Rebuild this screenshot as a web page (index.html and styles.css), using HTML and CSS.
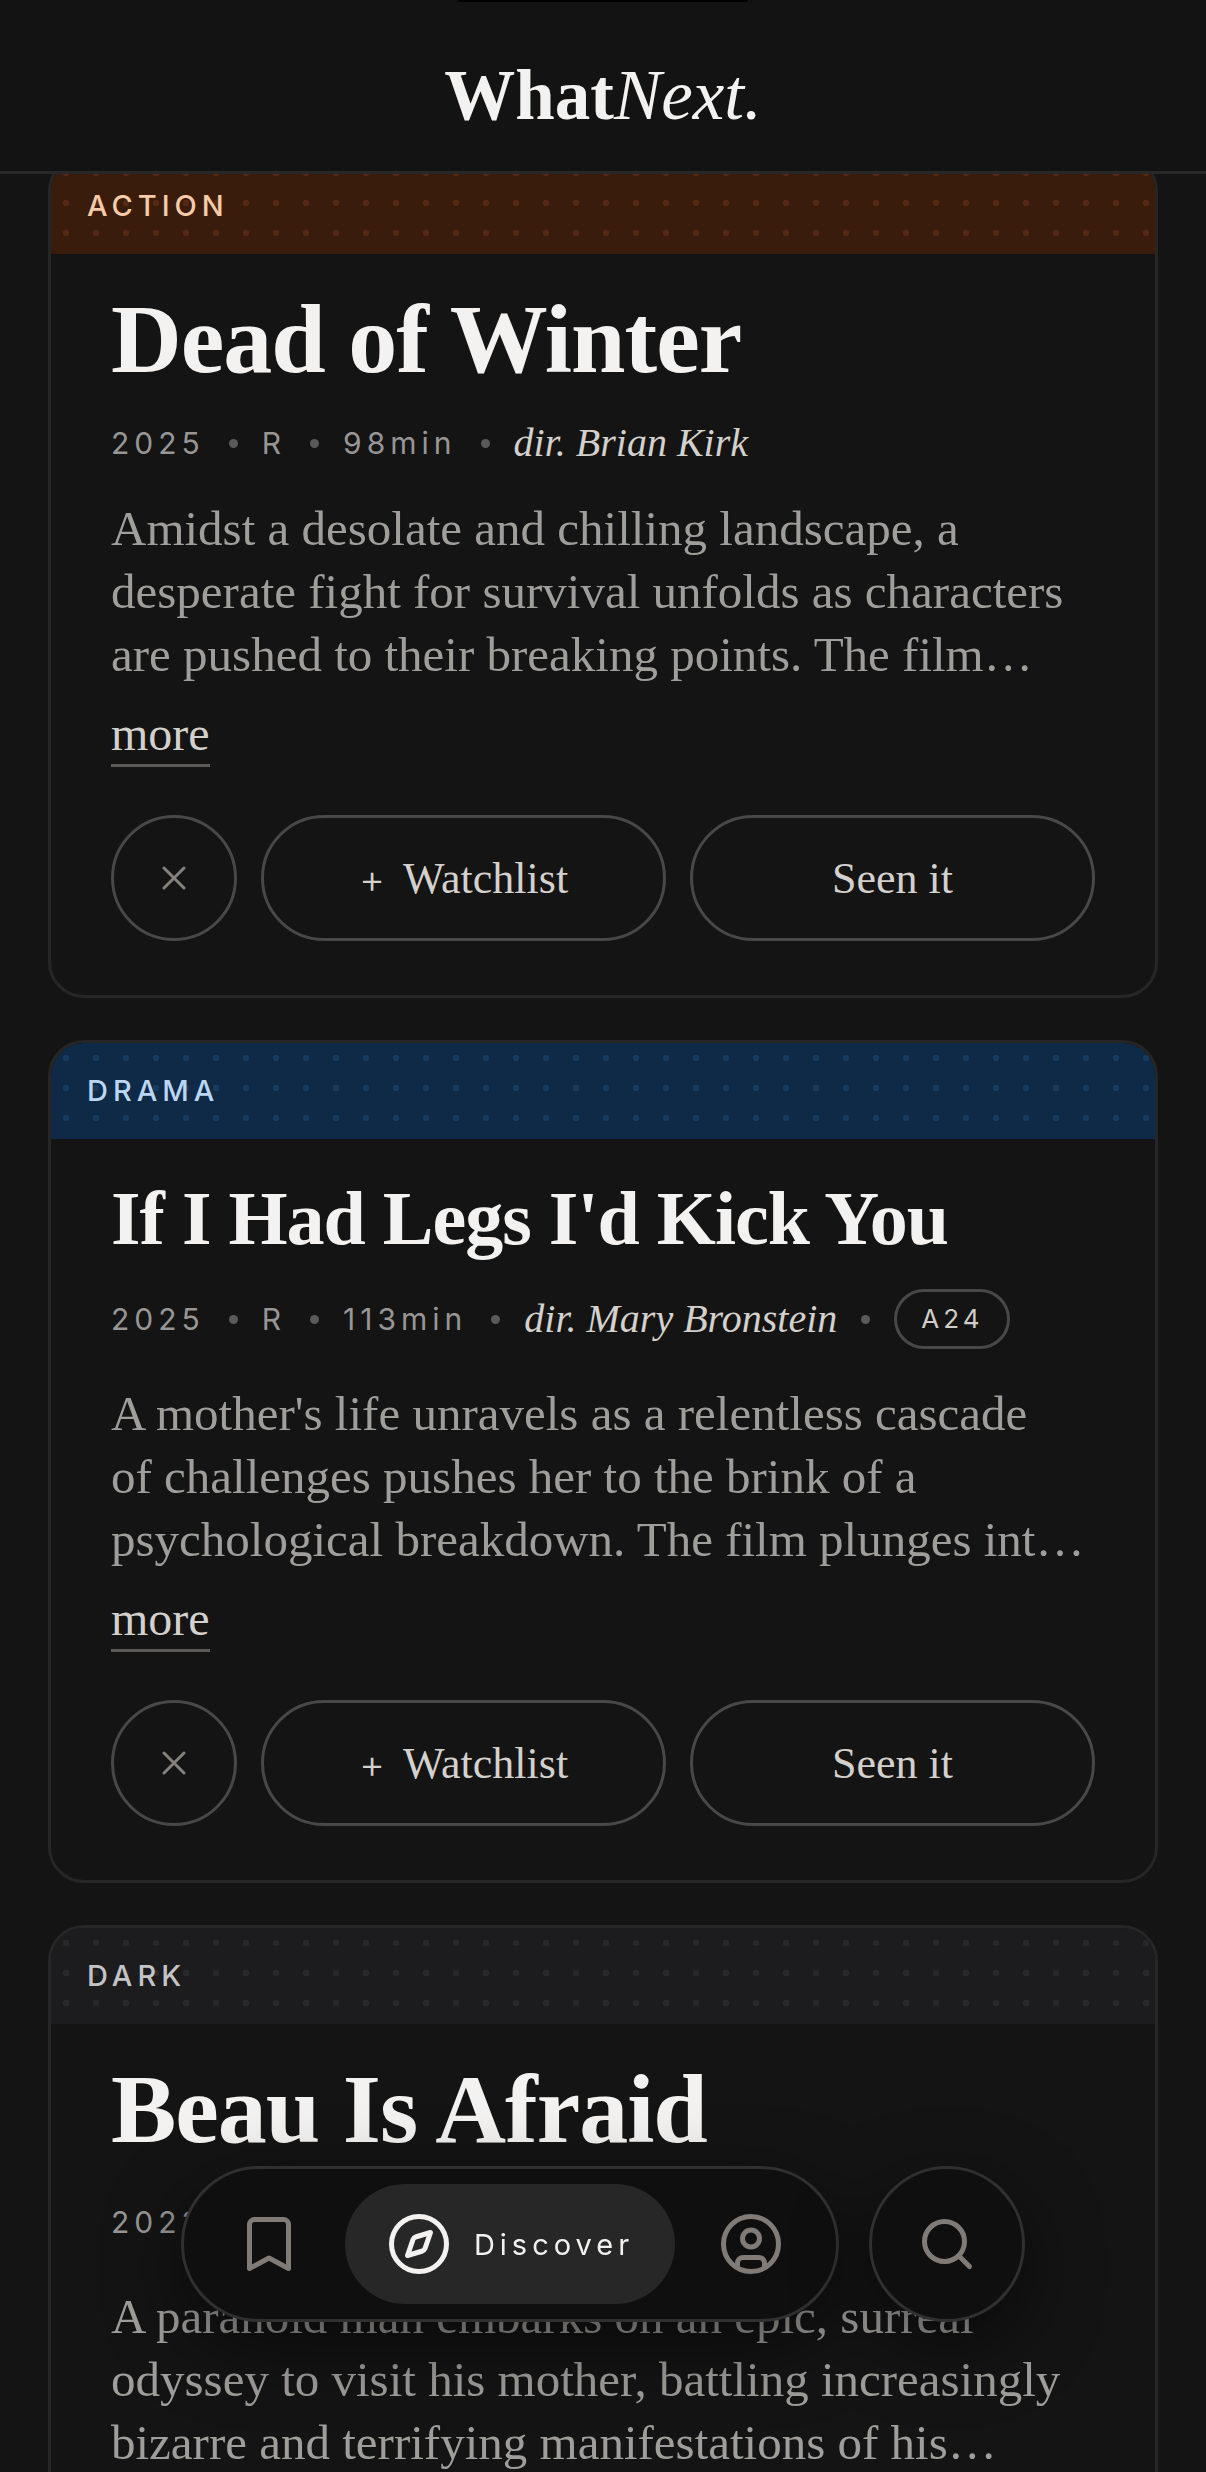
FILE: index.html
```html
<!DOCTYPE html>
<html lang="en">
    <head>
        <meta charset="utf-8">
        <title>WhatNext.</title>
        <meta name="viewport" content="width=device-width, initial-scale=1.0">
        <link rel="stylesheet" href="styles.css">
    </head>
    <body>
        <header class="topbar">
            <div class="island"></div>
            <h1 class="logo"><strong>What</strong><em>Next.</em></h1>
        </header>
        <main class="feed">
            <article class="card action">
                <div class="genre">ACTION</div>
                <div class="content">
                    <h2 class="title">Dead of Winter</h2>
                    <div class="meta">
                        <span>2025</span><i class="dot"></i><span>R</span><i class="dot"></i><span>98min</span><i class="dot"></i><span class="director">dir. Brian Kirk</span>
                    </div>
                    <p class="plot">Amidst a desolate and chilling landscape, a<br>desperate fight for survival unfolds as characters<br>are pushed to their breaking points. The film…</p>
                    <a class="more" href="#">more</a>
                    <div class="buttons">
                        <button class="skip" type="button" aria-label="Not interested">
                            <svg viewBox="0 0 24 24"><path d="M2 2L22 22M22 2L2 22"/></svg>
                        </button>
                        <button type="button"><span class="plus">+</span>Watchlist</button>
                        <button type="button">Seen it</button>
                    </div>
                </div>
            </article>
            <article class="card drama">
                <div class="genre">DRAMA</div>
                <div class="content">
                    <h2 class="title long">If I Had Legs I'd Kick You</h2>
                    <div class="meta">
                        <span>2025</span><i class="dot"></i><span>R</span><i class="dot"></i><span>113min</span><i class="dot"></i><span class="director">dir. Mary Bronstein</span><i class="dot"></i><span class="studio">A24</span>
                    </div>
                    <p class="plot">A mother's life unravels as a relentless cascade<br>of challenges pushes her to the brink of a<br>psychological breakdown. The film plunges int…</p>
                    <a class="more" href="#">more</a>
                    <div class="buttons">
                        <button class="skip" type="button" aria-label="Not interested">
                            <svg viewBox="0 0 24 24"><path d="M2 2L22 22M22 2L2 22"/></svg>
                        </button>
                        <button type="button"><span class="plus">+</span>Watchlist</button>
                        <button type="button">Seen it</button>
                    </div>
                </div>
            </article>
            <article class="card dark">
                <div class="genre">DARK</div>
                <div class="content">
                    <h2 class="title">Beau Is Afraid</h2>
                    <div class="meta">
                        <span>2023</span><i class="dot"></i><span>R</span><i class="dot"></i><span class="director">dir. Ari Aster</span><i class="dot"></i><span class="studio">A24</span>
                    </div>
                    <p class="plot">A paranoid man embarks on an epic, surreal<br>odyssey to visit his mother, battling increasingly<br>bizarre and terrifying manifestations of his…</p>
                </div>
            </article>
        </main>
        <div class="dock">
            <nav class="tabs">
                <a href="#" aria-label="Watchlist">
                    <svg viewBox="0 0 66 66"><path d="M18.5 8.5H47.5A5 5 0 0 1 52.5 13.5V57.5L33 47L13.5 57.5V13.5A5 5 0 0 1 18.5 8.5Z"/></svg>
                </a>
                <a class="current" href="#">
                    <svg viewBox="0 0 66 66"><circle cx="33" cy="33" r="27.5"/><path d="M44.500 21.500L39 37.500Q38 39.500 36.500 40L21.500 44.500L27 28.500Q28 26.500 29.500 26Z"/></svg>
                    Discover
                </a>
                <a href="#" aria-label="Profile">
                    <svg viewBox="0 0 66 66"><circle cx="33" cy="33" r="27.5"/><circle cx="33" cy="27.5" r="8.500"/><path d="M19.500 56V52A5.500 5.500 0 0 1 25 46.500H41A5.500 5.500 0 0 1 46.500 52V56"/></svg>
                </a>
            </nav>
            <button class="search" type="button" aria-label="Search">
                <svg viewBox="0 0 66 66"><circle cx="30.500" cy="30.500" r="20"/><path d="M45 45L55.500 55.500"/></svg>
            </button>
        </div>
    </body>
</html>
```
FILE: styles.css
```css
html, body {
    margin: 0;
    height: 100%;
    overflow: hidden;
}
body {
    background-color: #141414;
    color: #f4f2f0;
    font-family: "Liberation Serif", serif;
}
* {
    box-sizing: border-box;
}
.topbar {
    position: relative;
    z-index: 2;
    padding: 56px 0 37px;
    background-color: #131313;
    border-bottom: 3px solid #282828;
    text-align: center;
}
.island {
    position: absolute;
    top: 0;
    left: 38%;
    width: 24%;
    height: 2px;
    background-color: black;
    border-radius: 0 0 24px 24px;
}
.logo {
    margin: 0;
    font-size: 71px;
    line-height: 78px;
    font-weight: normal;
}
.feed {
    display: flex;
    flex-direction: column;
    gap: 42px;
    margin-top: -19px;
    padding: 0 48px;
}
.card {
    overflow: hidden;
    flex-shrink: 0;
    border: 3px solid #262626;
    border-radius: 36px;
}
.genre {
    padding: 0 36px;
    background-position: 0 0;
    background-size: 30px 30px;
    font-family: Inter, sans-serif;
    font-size: 29px;
    font-weight: 500;
    line-height: 96px;
    letter-spacing: 5px;
}
.action .genre {
    background-color: #3a1c0c;
    background-image: radial-gradient(circle, #542812 3px, transparent 3px);
    color: #f6cba8;
}
.drama .genre {
    background-color: #0e2a47;
    background-image: radial-gradient(circle, #173a61 3px, transparent 3px);
    color: #bcd6f2;
}
.dark .genre {
    background-color: #1c1c1e;
    background-image: radial-gradient(circle, #28282a 3px, transparent 3px);
    color: #c4c4c6;
}
.content {
    padding: 30px 60px 54px;
}
.title {
    margin: 0 0 28px;
    font-size: 98px;
    line-height: 110px;
    letter-spacing: -1px;
}
.title.long {
    margin-bottom: 22px;
    font-size: 76px;
    line-height: 98px;
}
.meta {
    display: flex;
    align-items: center;
    gap: 24px;
    min-height: 42px;
    color: #989694;
    font-family: Inter, sans-serif;
    font-size: 30px;
    line-height: 42px;
    letter-spacing: 5px;
    white-space: nowrap;
}
.dot {
    width: 9px;
    height: 9px;
    border-radius: 50%;
    background-color: #5c5a58;
}
.director {
    color: #d4d0cc;
    font-family: "Liberation Serif", serif;
    font-size: 40px;
    font-style: italic;
    letter-spacing: 0;
}
.studio {
    padding: 0 24px;
    border: 3px solid #484848;
    border-radius: 30px;
    color: #d0ccc8;
    font-size: 26px;
    line-height: 54px;
    letter-spacing: 4px;
}
.plot {
    margin: 33px 0 18px;
    color: #a09e9b;
    font-size: 49px;
    line-height: 63px;
    white-space: nowrap;
}
.more {
    display: inline-block;
    border-bottom: 3px solid #5c5a58;
    color: #d4d0cc;
    font-size: 48px;
    line-height: 60px;
    text-decoration: none;
}
.buttons {
    display: flex;
    gap: 24px;
    margin-top: 48px;
}
.buttons button {
    display: flex;
    align-items: center;
    justify-content: center;
    gap: 18px;
    flex: 1;
    height: 126px;
    padding: 0;
    border: 3px solid #484848;
    border-radius: 63px;
    background: none;
    color: #d4d0cc;
    font-family: "Liberation Serif", serif;
    font-size: 44px;
}
.buttons .skip {
    flex: 0 0 126px;
    color: #85817d;
}
.plus {
    font-family: Inter, sans-serif;
    font-size: 40px;
    font-weight: 300;
}
svg {
    flex-shrink: 0;
    fill: none;
    stroke: currentColor;
    stroke-linecap: round;
    stroke-linejoin: round;
}
.skip svg {
    width: 24px;
    stroke-width: 3;
}
.dock {
    position: fixed;
    bottom: 150px;
    left: 0;
    right: 0;
    z-index: 3;
    display: flex;
    justify-content: center;
    gap: 30px;
    color: #807b77;
}
.dock svg {
    width: 66px;
    stroke-width: 5;
}
.tabs, .search {
    height: 156px;
    border: 3px solid #303030;
    border-radius: 78px;
    background-color: #0f0f0f;
    box-shadow: 0 24px 72px rgba(0, 0, 0, 0.5);
}
.tabs {
    display: flex;
    gap: 6px;
    padding: 15px;
}
.tabs a {
    display: flex;
    align-items: center;
    justify-content: center;
    width: 140px;
    border-radius: 60px;
    color: inherit;
    text-decoration: none;
}
.tabs .current {
    gap: 22px;
    width: auto;
    padding: 0 41px;
    background-color: #272727;
    color: #f4f2f0;
    font-family: Inter, sans-serif;
    font-size: 29px;
    letter-spacing: 5px;
}
.search {
    display: flex;
    align-items: center;
    justify-content: center;
    width: 156px;
    padding: 0;
    color: inherit;
}
```
